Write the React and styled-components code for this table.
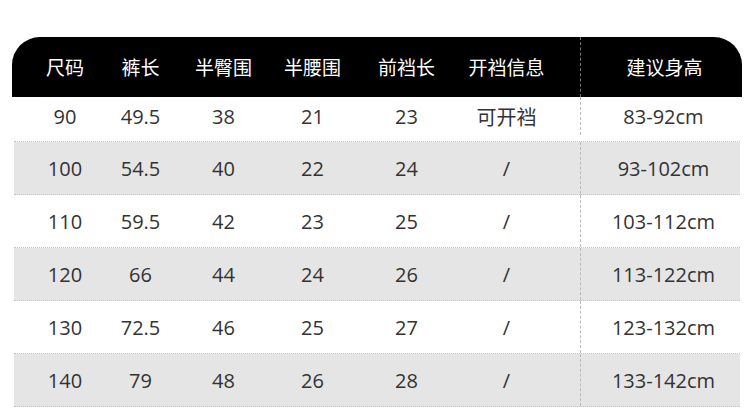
import React from 'react';
import styled, { createGlobalStyle } from 'styled-components';

const GlobalStyle = createGlobalStyle`
  html, body {
    margin: 0;
    padding: 0;
    background: #fff;
  }
  body {
    font-family: "Open Sans", "Noto Sans CJK SC", sans-serif;
  }
`

const Page = styled.div`
  width: 752px;
  height: 412px;
  overflow: hidden;
  padding: 37px 10px 0 12px;
  box-sizing: border-box;
`

const Table = styled.div`
  width: 730px;
`

const Row = styled.div`
  display: grid;
  grid-template-columns: 72px 79px 87px 91px 97px 125px 1fr;
  padding-left: 15px;
  padding-bottom: ${p => p.$lift || 0}px;
  align-items: stretch;
  height: ${p => p.$h}px;
  background: ${p => (p.$shade ? '#e5e5e5' : '#fff')};
  margin: 0 2px;
  border-bottom: 1px dotted #c4c4c4;
  box-sizing: border-box;
`

const HeadRow = styled(Row)`
  background: #000;
  margin: 0;
  padding-left: 17px;
  border-radius: 28px 28px 0 0;
  border-bottom: none;
  color: #fff;
`

const Cell = styled.div`
  display: flex;
  align-items: center;
  justify-content: center;
  font-size: ${p => (p.$head ? 19 : 20)}px;
  color: ${p => (p.$head ? '#fff' : '#333')};
  padding-right: ${p => (p.$info ? 22 : 0)}px;
  white-space: nowrap;
`

const HeightCell = styled(Cell)`
  border-left: 1px dashed ${p => (p.$head ? '#777' : '#bbb')};
  padding-left: 6px;
`

const headers = ['尺码', '裤长', '半臀围', '半腰围', '前裆长', '开裆信息'];

const rows = [
  ['90', '49.5', '38', '21', '23', '可开裆', '83-92cm'],
  ['100', '54.5', '40', '22', '24', '/', '93-102cm'],
  ['110', '59.5', '42', '23', '25', '/', '103-112cm'],
  ['120', '66', '44', '24', '26', '/', '113-122cm'],
  ['130', '72.5', '46', '25', '27', '/', '123-132cm'],
  ['140', '79', '48', '26', '28', '/', '133-142cm'],
];

export default function App() {
  return (
    <Page>
      <GlobalStyle />
      <Table>
        <HeadRow $h={60}>
          {headers.map((h, i) => (
            <Cell key={h} $head $info={i === 5}>{h}</Cell>
          ))}
          <HeightCell $head>建议身高</HeightCell>
        </HeadRow>
        {rows.map((r, ri) => (
          <Row
            key={r[0]}
            $h={ri === 0 ? 45 : 53}
            $lift={ri === 0 ? 6 : 0}
            $shade={ri % 2 === 1}
          >
            {r.slice(0, 6).map((v, i) => (
              <Cell key={i} $info={i === 5}>{v}</Cell>
            ))}
            <HeightCell>{r[6]}</HeightCell>
          </Row>
        ))}
      </Table>
    </Page>
  );
}
